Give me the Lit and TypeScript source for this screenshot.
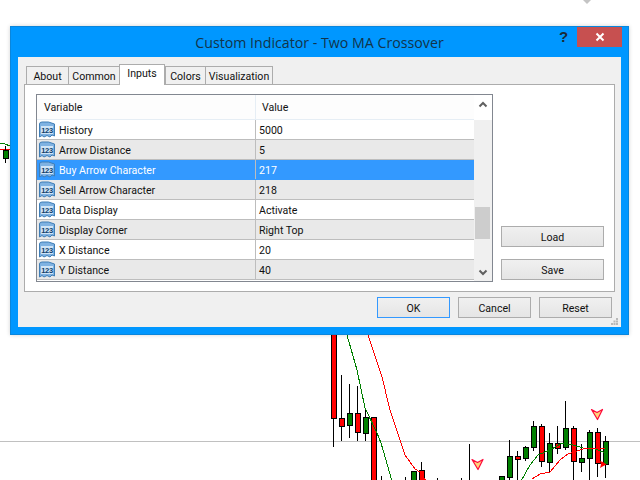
import { LitElement, html, css, svg } from "lit";
import { customElement } from "lit/decorators.js";

type C = [number, number, number, number, number, number]; // x, wickTop, wickBot, bodyTop, bodyBot, isRed
const candles: C[] = [
  [5, 146, 163, 150, 158, 0],
  [333, 330, 447, 330, 418, 1],
  [341, 375, 441, 418, 426, 1],
  [349, 384, 438, 413, 425, 0],
  [357, 386, 441, 413, 432, 1],
  [365, 408, 441, 417, 433, 0],
  [373, 417, 481, 417, 481, 1],
  [381, 476, 481, 481, 481, 0],
  [405, 477, 481, 481, 481, 0],
  [413, 471, 481, 471, 481, 0],
  [421, 462, 481, 470, 481, 1],
  [437, 478, 481, 481, 481, 0],
  [461, 478, 481, 481, 481, 0],
  [469, 444, 481, 481, 481, 0],
  [501, 476, 481, 476, 481, 0],
  [509, 440, 481, 456, 477, 0],
  [517, 451, 481, 456, 459, 1],
  [525, 446, 461, 447, 458, 0],
  [533, 421, 451, 426, 447, 0],
  [541, 424, 467, 426, 461, 1],
  [549, 433, 472, 443, 462, 0],
  [557, 426, 454, 443, 448, 1],
  [565, 401, 450, 428, 447, 0],
  [573, 426, 481, 428, 461, 1],
  [581, 444, 472, 458, 462, 0],
  [589, 430, 481, 432, 458, 0],
  [597, 428, 477, 432, 463, 1],
  [605, 436, 478, 441, 464, 0],
];

const lines: [string, string][] = [
  ["#008000", "347,335 357,370 365,408 377,433 381,443 392,481"],
  ["#ff0000", "368,335 373,350 382,377 390,410 400,440 405,455 415,469 420,472 426,481"],
  ["#008000", "521,481 530,465 538,455 550,450 562,443 573,445 583,448 593,448 605,453"],
  ["#ff0000", "532,479 540,474 550,472 560,460 568,454 583,449 605,448"],
  ["#008000", "0,143 5,144 10,146"],
];

const rows = [
  ["History", "5000"],
  ["Arrow Distance", "5"],
  ["Buy Arrow Character", "217"],
  ["Sell Arrow Character", "218"],
  ["Data Display", "Activate"],
  ["Display Corner", "Right Top"],
  ["X Distance", "20"],
  ["Y Distance", "40"],
];

const tabs = ["About", "Common", "Inputs", "Colors", "Visualization"];

@customElement("app-root")
export class AppRoot extends LitElement {
  static styles = css`
    :host {
      display: block;
      width: 640px;
      height: 480px;
      position: relative;
      overflow: hidden;
      background: #fff;
      font-family: Roboto, "Liberation Sans", Arial, sans-serif;
      font-size: 10.6px;
      color: #111;
    }
    .chart { position: absolute; inset: 0; }
    .win {
      position: absolute;
      left: 10px;
      top: 26px;
      width: 619px;
      height: 309px;
      box-sizing: border-box;
      background: #0097ff;
      border: 1px solid #0a86dc;
      box-shadow: 0 0 4px rgba(0, 0, 0, 0.18);
      display: flex;
      flex-direction: column;
    }
    .titlebar {
      height: 30px;
      flex: none;
      position: relative;
      display: flex;
      align-items: center;
      justify-content: center;
      font-family: "Open Sans", "Noto Sans", sans-serif;
      font-size: 14.2px;
      color: #12344a;
    }
    .help {
      position: absolute;
      left: 548px;
      top: 1px;
      font: bold 15px "Liberation Sans", sans-serif;
      color: #1a2a36;
    }
    .close {
      position: absolute;
      left: 566px;
      top: 0;
      width: 45px;
      height: 20px;
      background: #c75050;
      display: flex;
      align-items: center;
      justify-content: center;
    }
    .body {
      flex: 1;
      margin: 0 7px 7px 7px;
      background: #f0f0f0;
      position: relative;
      display: flex;
      flex-direction: column;
      padding: 7px 6px 0 6px;
    }
    .tabs {
      display: grid;
      grid-template-columns: 42px 51px 46px 40px 68px;
      align-items: end;
      height: 20px;
      padding-left: 2px;
      position: relative;
      z-index: 1;
    }
    .tab {
      height: 18px;
      box-sizing: border-box;
      border: 1px solid #acacac;
      border-bottom: none;
      border-right-width: 0;
      background: #f0f0f0;
      display: flex;
      align-items: center;
      justify-content: center;
      padding-top: 1px;
    }
    .tab.last { border-right-width: 1px; }
    .tab.sel {
      height: 21px;
      background: #fff;
      border-right-width: 1px;
      margin-bottom: -1px;
      padding: 0 0 3px;
    }
    .panel {
      width: 591px;
      height: 208px;
      box-sizing: border-box;
      background: #fff;
      border: 1px solid #acacac;
      display: flex;
      padding: 9px 11px;
      gap: 8px;
    }
    .table {
      width: 457px;
      height: 188px;
      box-sizing: border-box;
      border: 1px solid #828790;
      display: flex;
      background: #fff;
    }
    .cols { width: 437px; flex: none; display: flex; flex-direction: column; }
    .head, .row {
      display: grid;
      grid-template-columns: 218px 219px;
      box-sizing: border-box;
    }
    .head {
      height: 25px;
      background: #fdfdfd;
      border-bottom: 1px solid #e6eef5;
      align-items: center;
    }
    .head span { padding: 1px 0 0 7px; }
    .head span + span { border-left: 1px solid #e6eef5; padding: 1px 0 0 6px; line-height: 23px; }
    .row {
      height: 20px;
      border-bottom: 1px solid #bdbdbd;
      align-items: center;
    }
    .row.alt { background: #e9e9e9; }
    .row.sel { background: #3399ff; color: #fff; border-bottom-color: #3399ff; }
    .name { display: flex; align-items: center; gap: 4px; padding-left: 2px; }
    .name svg { flex: none; }
    .name span { padding-top: 1px; }
    .val { border-left: 1px solid #bdbdbd; padding-left: 3px; height: 19px; line-height: 21px; }
    .sb {
      width: 18px;
      flex: none;
      box-sizing: border-box;
      padding-right: 1px;
      display: flex;
      flex-direction: column;
      align-items: center;
      background: linear-gradient(#fff 25px, #f0f0f0 25px);
    }
    .sb .top { width: 17px; height: 19px; display: flex; align-items: center; justify-content: center; }
    .sb .track { flex: 1; width: 100%; display: flex; flex-direction: column; justify-content: flex-end; padding-bottom: 25px; box-sizing: border-box; }
    .sb .thumb { height: 32px; background: #cdcdcd; margin: 0 1px; }
    .sb .bot { height: 17px; width: 17px; display: flex; align-items: center; justify-content: center; }
    .side {
      display: flex;
      flex-direction: column;
      justify-content: flex-end;
      gap: 12px;
      padding-bottom: 2px;
    }
    .btn {
      box-sizing: border-box;
      border: 1px solid #acacac;
      background: linear-gradient(#f0f0f0, #e5e5e5);
      display: flex;
      align-items: center;
      justify-content: center;
      height: 21px;
      width: 103px;
      padding-top: 1px;
    }
    .foot {
      display: flex;
      justify-content: flex-end;
      gap: 8px;
      padding: 5px 3px 0 0;
    }
    .foot .btn { width: 73px; }
    .foot .btn.def { border-color: #3399ff; }
    .grip { position: absolute; right: 3px; bottom: 2px; }
  `;

  private icon() {
    return html`<svg width="16" height="17" viewBox="0 0 16 17">
      <path d="M0.5 3 Q0.5 1 3 1 H9.5 L15.5 3 V15 L13 14 L11 16 L8 14.5 L5 16 L3 14.5 L0.5 16 Z" fill="#7fb2e2" stroke="#3f7db5" stroke-width="1"/>
      <rect x="2" y="5" width="12" height="8" fill="#cfe4f7"/>
      <text x="8" y="12" text-anchor="middle" font-family="Liberation Sans" font-size="7.5" font-weight="700" letter-spacing="-0.3" fill="#0f3f6b">123</text>
    </svg>`;
  }

  render() {
    return html`
      <svg class="chart" width="640" height="480" viewBox="0 0 640 480">
        <rect x="0" y="441" width="640" height="1" fill="#c0c0c0"/>
        <rect x="0" y="149" width="10" height="1" fill="#ff0000"/>
        <polygon points="583,0 591,0 587,4" fill="#c4c4c4"/>
        ${candles.map(([x, wt, wb, bt, bb, red]) => svg`
          <rect x=${x} y=${wt} width="1" height=${wb - wt} fill="#000"/>
          ${bb > bt ? svg`<rect x=${x - 2} y=${bt} width="5" height=${bb - bt} fill=${red ? "#ff0000" : "#008000"} stroke="#000" stroke-width="1" shape-rendering="crispEdges"/>` : ""}
        `)}
        ${lines.map(([c, p]) => svg`<polyline points=${p} fill="none" stroke=${c} stroke-width="1" shape-rendering="crispEdges"/>`)}
        <path d="M591.5 409.5 L597 412.5 L602.5 409.5 L597.5 419.5 Z" fill="#ffd27a" stroke="#ff0a3c" stroke-width="1.2" stroke-linejoin="round"/>
        <path d="M472 459.5 L477.5 462.5 L483 459.5 L478 469.5 Z" fill="#ffd27a" stroke="#ff0a3c" stroke-width="1.2" stroke-linejoin="round"/>
        <path d="M600 461 L603 462 L606.5 464.5 L602.5 466.5 L600 468 L601 464.5 Z" fill="#ff0000"/>
      </svg>

      <div class="win">
        <div class="titlebar">
          Custom Indicator - Two MA Crossover
          <span class="help">?</span>
          <span class="close">
            <svg width="10" height="10" viewBox="0 0 10 10"><path d="M1.5 1.5 L8.5 8.5 M8.5 1.5 L1.5 8.5" stroke="#fff" stroke-width="2"/></svg>
          </span>
        </div>
        <div class="body">
          <div class="tabs">
            ${tabs.map((t, i) => html`<div class="tab ${t === "Inputs" ? "sel" : ""} ${i === tabs.length - 1 ? "last" : ""}">${t}</div>`)}
          </div>
          <div class="panel">
            <div class="table">
              <div class="cols">
                <div class="head"><span>Variable</span><span>Value</span></div>
                ${rows.map(([n, v], i) => html`
                  <div class="row ${i % 2 ? "alt" : ""} ${i === 2 ? "sel" : ""}">
                    <div class="name">${this.icon()}<span>${n}</span></div>
                    <div class="val">${v}</div>
                  </div>`)}
              </div>
              <div class="sb">
                <div class="top"><svg width="10" height="7" viewBox="0 0 10 7"><path d="M1.5 5.5 L5 2 L8.5 5.5" fill="none" stroke="#606060" stroke-width="2"/></svg></div>
                <div class="track"><div class="thumb"></div></div>
                <div class="bot"><svg width="10" height="7" viewBox="0 0 10 7"><path d="M1.5 1.5 L5 5 L8.5 1.5" fill="none" stroke="#606060" stroke-width="2"/></svg></div>
              </div>
            </div>
            <div class="side">
              <div class="btn">Load</div>
              <div class="btn">Save</div>
            </div>
          </div>
          <div class="foot">
            <div class="btn def">OK</div>
            <div class="btn">Cancel</div>
            <div class="btn">Reset</div>
          </div>
          <svg class="grip" width="7" height="7" viewBox="0 0 7 7" fill="#b8b8b8">
            <rect x="5" y="0" width="2" height="2"/>
            <rect x="2.5" y="2.5" width="2" height="2"/><rect x="5" y="2.5" width="2" height="2"/>
            <rect x="0" y="5" width="2" height="2"/><rect x="2.5" y="5" width="2" height="2"/><rect x="5" y="5" width="2" height="2"/>
          </svg>
        </div>
      </div>
    `;
  }
}
